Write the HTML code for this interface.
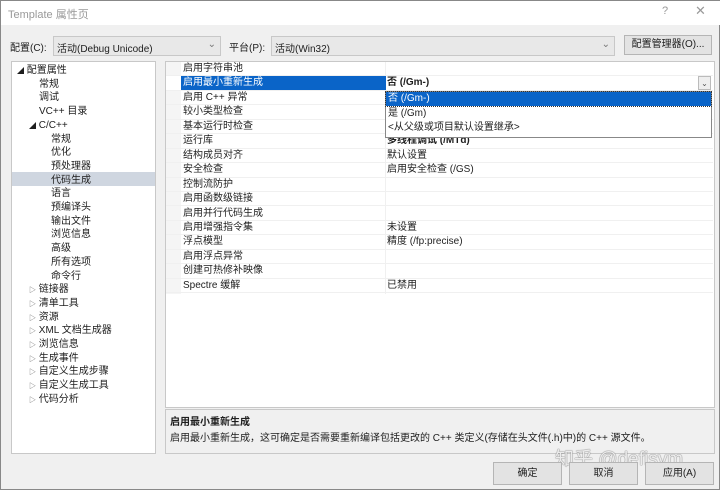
<!DOCTYPE html>
<html><head><meta charset="utf-8"><style>
*{margin:0;padding:0;box-sizing:border-box}
body{width:720px;height:490px;background:#f0f0f0;font-family:"Liberation Sans","Noto Sans CJK SC",sans-serif;font-size:10px;color:#1e1e1e;position:relative;overflow:hidden;border:1px solid #888}
.a{position:absolute;white-space:nowrap}
.sel{background:#fff;border:1px solid #c8c8c8;height:20px}
.btn{position:absolute;background:#e3e3e3;border:1px solid #b5b5b5;text-align:center;line-height:22px;font-size:10px}
.row{position:absolute;left:0;width:547px;height:14.45px;border-bottom:1px solid #f0f0f0;line-height:13px}
.row span{position:absolute;top:0;left:17px}
.row b{position:absolute;top:0;left:221px;font-weight:normal}
.ti{position:absolute;height:13.7px;line-height:13.7px}
</style></head><body>
<div class="a" style="left:0;top:0;width:720px;height:24px;background:#fff"></div>
<div class="a" style="left:7px;top:5px;color:#999;font-size:11px">Template 属性页</div>
<div class="a" style="left:661px;top:4px;color:#999;font-size:11px">?</div>
<div class="a" style="left:694px;top:2px;color:#999;font-size:13px">✕</div>

<div class="a" style="left:9px;top:38px">配置(C):</div>
<div class="a sel" style="left:52px;top:35px;width:168px;background:#e8e8e8"><span style="position:absolute;left:3px;top:3px">活动(Debug Unicode)</span><span style="position:absolute;right:4px;top:2px;color:#777">⌄</span></div>
<div class="a" style="left:228px;top:38px">平台(P):</div>
<div class="a sel" style="left:270px;top:35px;width:344px;background:#e8e8e8"><span style="position:absolute;left:3px;top:3px">活动(Win32)</span><span style="position:absolute;right:4px;top:2px;color:#777">⌄</span></div>
<div class="btn" style="left:623px;top:34px;width:88px;height:20px;line-height:18px">配置管理器(O)...</div>

<div class="a" style="left:10px;top:60px;width:145px;height:393px;background:#fff;border:1px solid #c8c8c8">
<div style="position:absolute;left:0;top:110px;width:143px;height:13.7px;background:#cfd6e0"></div>
<div class="ti" style="left:5px;top:2px"><span style="font-size:7px">◢</span> 配置属性</div>
<div class="ti" style="left:27px;top:15.7px">常规</div>
<div class="ti" style="left:27px;top:29.4px">调试</div>
<div class="ti" style="left:27px;top:43.1px">VC++ 目录</div>
<div class="ti" style="left:17px;top:56.8px"><span style="font-size:7px">◢</span> C/C++</div>
<div class="ti" style="left:39px;top:70.5px">常规</div>
<div class="ti" style="left:39px;top:84.2px">优化</div>
<div class="ti" style="left:39px;top:97.9px">预处理器</div>
<div class="ti" style="left:39px;top:111.6px">代码生成</div>
<div class="ti" style="left:39px;top:125.3px">语言</div>
<div class="ti" style="left:39px;top:139px">预编译头</div>
<div class="ti" style="left:39px;top:152.7px">输出文件</div>
<div class="ti" style="left:39px;top:166.4px">浏览信息</div>
<div class="ti" style="left:39px;top:180.1px">高级</div>
<div class="ti" style="left:39px;top:193.8px">所有选项</div>
<div class="ti" style="left:39px;top:207.5px">命令行</div>
<div class="ti" style="left:17px;top:221.2px"><span style="font-size:7px;color:#666">▷</span> 链接器</div>
<div class="ti" style="left:17px;top:234.9px"><span style="font-size:7px;color:#666">▷</span> 清单工具</div>
<div class="ti" style="left:17px;top:248.6px"><span style="font-size:7px;color:#666">▷</span> 资源</div>
<div class="ti" style="left:17px;top:262.3px"><span style="font-size:7px;color:#666">▷</span> XML 文档生成器</div>
<div class="ti" style="left:17px;top:276px"><span style="font-size:7px;color:#666">▷</span> 浏览信息</div>
<div class="ti" style="left:17px;top:289.7px"><span style="font-size:7px;color:#666">▷</span> 生成事件</div>
<div class="ti" style="left:17px;top:303.4px"><span style="font-size:7px;color:#666">▷</span> 自定义生成步骤</div>
<div class="ti" style="left:17px;top:317.1px"><span style="font-size:7px;color:#666">▷</span> 自定义生成工具</div>
<div class="ti" style="left:17px;top:330.8px"><span style="font-size:7px;color:#666">▷</span> 代码分析</div>
</div>

<div class="a" style="left:164px;top:60px;width:550px;height:347px;background:#fff;border:1px solid #c8c8c8">
<div style="position:absolute;left:0;top:0;width:15px;height:232px;background:#f5f5f5"></div>
<div style="position:absolute;left:219px;top:0;width:1px;height:232px;background:#f0f0f0"></div>
<div class="row" style="top:0"><span>启用字符串池</span></div>
<div class="row" style="top:14.45px;background:#fff"><span style="background:#0a64c8;color:#fff;left:15px;width:205px;top:0;height:14px;padding:0 2px">启用最小重新生成</span><b style="font-weight:bold">否 (/Gm-)</b><i style="position:absolute;right:2px;top:0;width:13px;height:14px;border:1px solid #bbb;background:#eee;font-style:normal;font-size:8px;text-align:center;color:#555">⌄</i></div>
<div class="row" style="top:28.9px"><span>启用 C++ 异常</span></div>
<div class="row" style="top:43.35px"><span>较小类型检查</span></div>
<div class="row" style="top:57.8px"><span>基本运行时检查</span></div>
<div class="row" style="top:72.25px"><span>运行库</span><b style="font-weight:bold">多线程调试 (/MTd)</b></div>
<div class="row" style="top:86.7px"><span>结构成员对齐</span><b>默认设置</b></div>
<div class="row" style="top:101.15px"><span>安全检查</span><b>启用安全检查 (/GS)</b></div>
<div class="row" style="top:115.6px"><span>控制流防护</span></div>
<div class="row" style="top:130.05px"><span>启用函数级链接</span></div>
<div class="row" style="top:144.5px"><span>启用并行代码生成</span></div>
<div class="row" style="top:158.95px"><span>启用增强指令集</span><b>未设置</b></div>
<div class="row" style="top:173.4px"><span>浮点模型</span><b>精度 (/fp:precise)</b></div>
<div class="row" style="top:187.85px"><span>启用浮点异常</span></div>
<div class="row" style="top:202.3px"><span>创建可热修补映像</span></div>
<div class="row" style="top:216.75px"><span>Spectre 缓解</span><b>已禁用</b></div>
</div>

<div class="a" style="left:384px;top:90px;width:327px;height:47px;background:#fff;border:1px solid #888;line-height:13px">
<div style="position:absolute;left:0;top:0;width:325px;height:14px;background:#0a64c8;color:#fff;padding:0 2px;outline:1px dotted #333">否 (/Gm-)</div>
<div style="position:absolute;left:2px;top:15px">是 (/Gm)</div>
<div style="position:absolute;left:2px;top:29px">&lt;从父级或项目默认设置继承&gt;</div>
</div>

<div class="a" style="left:164px;top:408px;width:550px;height:45px;border:1px solid #c8c8c8;background:#f0f0f0">
<div style="position:absolute;left:4px;top:3px;font-weight:bold">启用最小重新生成</div>
<div style="position:absolute;left:4px;top:19px">启用最小重新生成，这可确定是否需要重新编译包括更改的 C++ 类定义(存储在头文件(.h)中)的 C++ 源文件。</div>
</div>
<div class="a" style="left:554px;top:443px;font-size:19px;color:#ececec;text-shadow:0 0 1px #777,0 0 1px #777">知乎 @defisym</div>

<div class="btn" style="left:492px;top:461px;width:69px;height:23px">确定</div>
<div class="btn" style="left:568px;top:461px;width:69px;height:23px">取消</div>
<div class="btn" style="left:644px;top:461px;width:69px;height:23px">应用(A)</div>
</body></html>
